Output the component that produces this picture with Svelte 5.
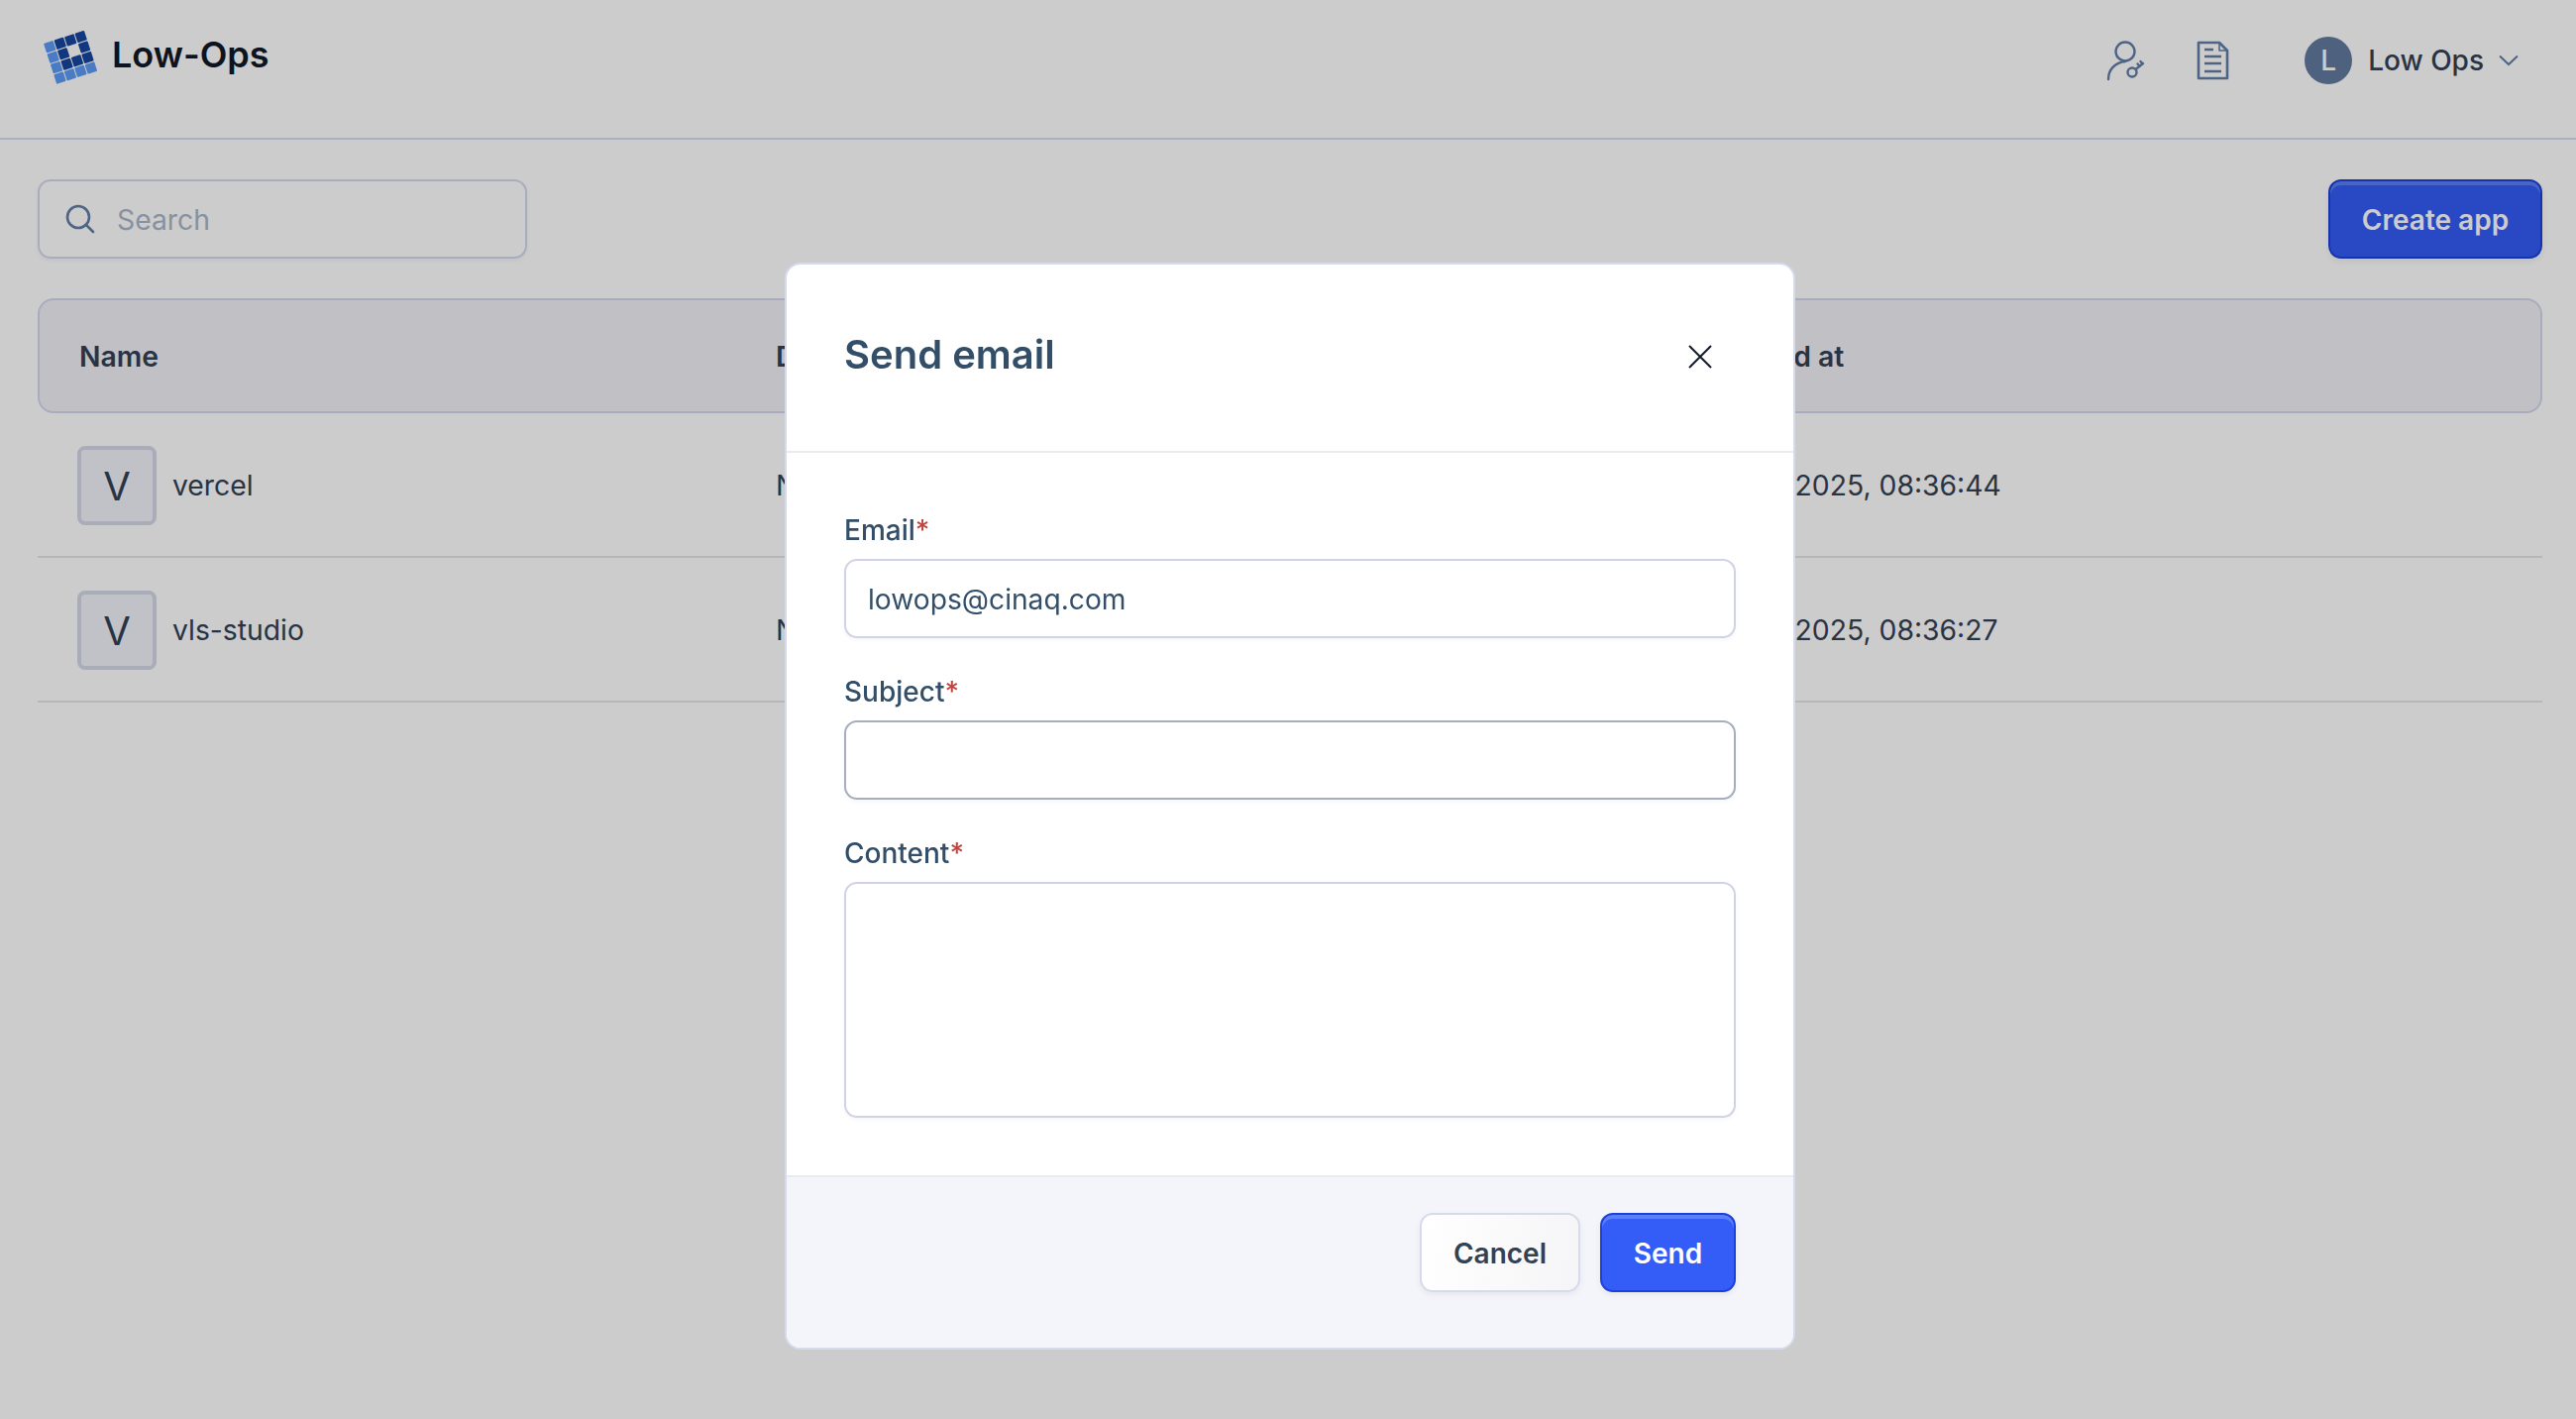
<script>
  const apps = [
    { letter: 'V', name: 'vercel', description: 'No description', created: 'Mar 5, 2025, 08:36:44' },
    { letter: 'V', name: 'vls-studio', description: 'No description', created: 'Mar 5, 2025, 08:36:27' },
  ];

  // 4x4 logo grid, l = light, d = dark, empty cell left out
  const logo = ['lddd', 'ld.d', 'lddd', 'llll'];
</script>

<div class="page">
  <header>
    <div class="brand">
      <svg class="logo" width="60" height="60" viewBox="0 0 60 60">
        <g transform="translate(5 19) rotate(-18)">
          {#each logo as row, y}
            {#each row.split('') as cell, x}
              {#if cell !== '.'}
                <rect x={x * 11} y={y * 11} width="10" height="10" rx="1" fill={cell === 'l' ? '#5c9bf5' : '#16479e'} />
              {/if}
            {/each}
          {/each}
        </g>
      </svg>
      <span>Low-Ops</span>
    </div>
    <div class="actions">
      <svg class="ico-key" width="42" height="44" viewBox="0 0 42 44" fill="none" stroke="#627ea6" stroke-width="2.4" stroke-linecap="round">
        <circle cx="20" cy="13" r="9.5" />
        <path d="M3 41C3 31 10 24 20 23" />
        <circle cx="27" cy="34" r="4.5" />
        <path d="M30.500 31L38 25M34.500 28L32.500 25.500M37.500 25.500L35.500 23" />
      </svg>
      <svg class="ico-doc" width="36" height="42" viewBox="0 0 36 42" fill="none" stroke="#627ea6" stroke-width="2.6" stroke-linejoin="round">
        <path d="M4 3H25L33 11V39H4Z" />
        <path d="M25 3V11H33" stroke-width="1.600" />
        <path d="M10 10H19M10 17H27M10 24H27M10 32H27" />
      </svg>
      <div class="user">
        <span class="avatar">L</span>
        <span class="user-name">Low Ops</span>
        <svg width="20" height="12" viewBox="0 0 20 12" fill="none" stroke="#627ea6" stroke-width="2"><path d="M1 1.500L10 10L19 1.500" /></svg>
      </div>
    </div>
  </header>

  <main>
    <div class="toolbar">
      <label class="search">
        <svg width="30" height="30" viewBox="0 0 30 30" fill="none" stroke="#627ea6" stroke-width="2.600" stroke-linecap="round">
          <circle cx="13" cy="13" r="11" />
          <path d="M21 21L28 28" />
        </svg>
        <input placeholder="Search" />
      </label>
      <button class="btn primary create">Create app</button>
    </div>

    <div class="table">
      <div class="thead">
        <div>Name</div>
        <div>Description</div>
        <div>Created at</div>
      </div>
      {#each apps as app}
        <div class="row">
          <div class="name-cell">
            <span class="tile">{app.letter}</span>
            <span>{app.name}</span>
          </div>
          <div>{app.description}</div>
          <div>{app.created}</div>
        </div>
      {/each}
    </div>
  </main>
</div>

<div class="overlay">
  <div class="modal">
    <div class="modal-head">
      <h2>Send email</h2>
      <button class="close" aria-label="Close">
        <svg width="24" height="24" viewBox="0 0 24 24" fill="none" stroke="#111827" stroke-width="2"><path d="M1 1L23 23M23 1L1 23" /></svg>
      </button>
    </div>
    <form class="modal-body">
      <label>
        <span>Email<em>*</em></span>
        <input value="lowops@cinaq.com" />
      </label>
      <label>
        <span>Subject<em>*</em></span>
        <input class="focused" />
      </label>
      <label>
        <span>Content<em>*</em></span>
        <textarea></textarea>
      </label>
    </form>
    <div class="modal-foot">
      <button class="btn cancel">Cancel</button>
      <button class="btn primary send">Send</button>
    </div>
  </div>
</div>

<style>
  :global(body) {
    background: #fff;
    font-family: Inter, "Liberation Sans", sans-serif;
    color: #334155;
  }

  .page {
    width: 2600px;
    height: 1432px;
    overflow: hidden;
  }

  header {
    height: 139px;
    border-bottom: 2px solid #d8dcf0;
    display: flex;
    justify-content: space-between;
    align-items: center;
    padding: 0 58px 0 39px;
    box-sizing: content-box;
  }

  .brand {
    display: flex;
    align-items: center;
    gap: 14px;
    margin-top: -30px;
    font-size: 36px;
    font-weight: 600;
    color: #111827;
  }

  .actions {
    display: flex;
    align-items: center;
    margin-top: -17px;
  }

  .ico-doc {
    margin-left: 48px;
  }

  .user {
    display: flex;
    align-items: center;
    margin-left: 75px;
    font-size: 28px;
    font-weight: 500;
  }

  .avatar {
    width: 48px;
    height: 48px;
    border-radius: 50%;
    background: #627ba0;
    color: #fff;
    display: flex;
    align-items: center;
    justify-content: center;
    font-size: 28px;
    font-weight: 500;
  }

  .user-name {
    margin: 0 15px 0 16px;
  }

  main {
    padding: 40px 34px 0 38px;
  }

  .toolbar {
    display: flex;
    justify-content: space-between;
    margin-bottom: 40px;
  }

  .search {
    width: 494px;
    height: 80px;
    box-sizing: border-box;
    border: 2px solid #d3d8ee;
    border-radius: 13px;
    background: #fff;
    box-shadow: 0 2px 4px rgba(0, 0, 0, 0.05);
    display: flex;
    align-items: center;
    gap: 22px;
    padding-left: 26px;
  }

  .search input {
    border: none;
    outline: none;
    background: none;
    font: inherit;
    font-size: 28.3px;
    width: 300px;
    padding: 2px 0 0;
  }

  .search input::placeholder {
    color: #a9b6c8;
  }

  .btn {
    font-family: inherit;
    font-size: 28px;
    font-weight: 600;
    height: 80px;
    box-sizing: border-box;
    border-radius: 13px;
    cursor: pointer;
    padding: 2px 0 0;
    box-shadow: 0 3px 6px rgba(0, 0, 0, 0.06);
  }

  .primary {
    color: #fff;
    background: #345cf6;
    border: 2px solid #1c40d8;
    box-shadow: inset 0 4px 0 #5b7ff8, 0 3px 6px rgba(0, 0, 0, 0.06);
  }

  .create {
    width: 216px;
  }

  .table {
    font-size: 28.3px;
  }

  .thead,
  .row {
    display: grid;
    align-items: center;
  }

  .thead {
    grid-template-columns: 703px 936px 1fr;
    padding: 2px 0 0 40px;
    height: 116px;
    box-sizing: border-box;
    background: #f0f0f7;
    border: 2px solid #d3d8ee;
    border-radius: 16px;
    font-weight: 600;
  }

  .row {
    grid-template-columns: 705px 936px 1fr;
    padding-left: 40px;
    height: 146px;
    box-sizing: border-box;
    border-bottom: 2px solid #e5e5e5;
    padding-top: 2px;
  }

  .name-cell {
    display: flex;
    align-items: center;
    gap: 16px;
  }

  .tile {
    width: 80px;
    height: 80px;
    box-sizing: border-box;
    border: 4px solid #d3d9e8;
    border-radius: 8px;
    background: #f1f3f9;
    display: flex;
    align-items: center;
    justify-content: center;
    font-size: 40px;
    font-weight: 400;
  }

  .overlay {
    position: fixed;
    inset: 0;
    background: rgba(0, 0, 0, 0.2);
    display: flex;
    justify-content: center;
    align-items: flex-start;
    padding: 265px 0 0 4px;
    box-sizing: border-box;
  }

  .modal {
    width: 1020px;
    height: 1097px;
    box-sizing: border-box;
    background: #fff;
    border: 2px solid #d5daec;
    border-radius: 16px;
    overflow: hidden;
    display: flex;
    flex-direction: column;
  }

  .modal-head {
    height: 190px;
    flex: none;
    border-bottom: 2px solid #ebebee;
    box-sizing: border-box;
    display: flex;
    justify-content: space-between;
    align-items: center;
    padding: 0 82px 0 58px;
  }

  h2 {
    margin: 0 0 7px;
    font-size: 40px;
    font-weight: 600;
    color: #334e68;
  }

  .close {
    background: none;
    border: none;
    padding: 0;
    margin-bottom: 2px;
    display: flex;
  }

  .modal-body {
    flex: 1;
    padding: 61px 58px 0 58px;
    display: flex;
    flex-direction: column;
    gap: 37px;
  }

  .modal-body label {
    display: flex;
    flex-direction: column;
    font-size: 28px;
    font-weight: 500;
    color: #334e68;
    gap: 12px;
  }

  em {
    font-style: normal;
    color: #c0443f;
  }

  .modal-body input,
  .modal-body textarea {
    display: block;
    box-sizing: border-box;
    width: 100%;
    font-family: inherit;
    font-size: 28.2px;
    color: #334e68;
    border: 2px solid #d0d3e4;
    border-radius: 13px;
    outline: none;
    padding: 1px 22px 0;
    background: #fff;
    box-shadow: 0 2px 4px rgba(0, 0, 0, 0.04);
  }

  .modal-body input {
    height: 80px;
  }

  .modal-body input.focused {
    border-color: #a5adbf;
  }

  .modal-body textarea {
    height: 238px;
    resize: none;
  }

  .modal-foot {
    height: 174px;
    flex: none;
    box-sizing: border-box;
    background: #f4f5fa;
    border-top: 2px solid #ebebee;
    display: flex;
    justify-content: flex-end;
    align-items: flex-start;
    gap: 20px;
    padding: 36px 58px 0 0;
  }

  .cancel {
    width: 162px;
    color: #334155;
    background: linear-gradient(100deg, #fff, #f5f5f7);
    border: 2px solid #d5daec;
  }

  .send {
    width: 137px;
  }
</style>
